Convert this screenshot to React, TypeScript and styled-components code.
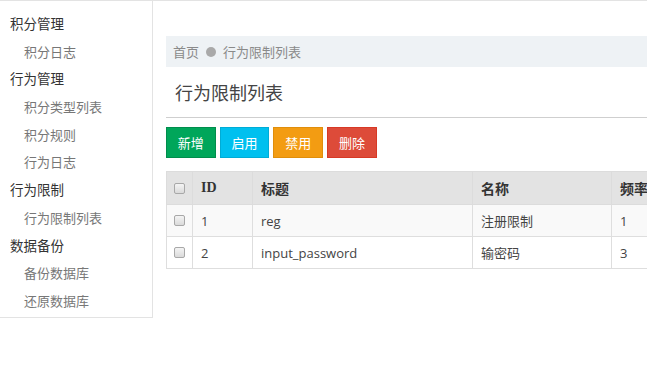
import styled, { createGlobalStyle } from "styled-components";

const GlobalStyle = createGlobalStyle`
  html, body {
    margin: 0;
    padding: 0;
    background: #fff;
    overflow: hidden;
  }
  body {
    font-family: "Open Sans", "Noto Sans CJK SC", sans-serif;
    font-size: 13px;
    color: #333;
  }
`;

type MenuItem = { label: string; sub?: boolean };

const menu: MenuItem[] = [
  { label: "积分管理" },
  { label: "积分日志", sub: true },
  { label: "行为管理" },
  { label: "积分类型列表", sub: true },
  { label: "积分规则", sub: true },
  { label: "行为日志", sub: true },
  { label: "行为限制" },
  { label: "行为限制列表", sub: true },
  { label: "数据备份" },
  { label: "备份数据库", sub: true },
  { label: "还原数据库", sub: true },
];

const rows = [
  { id: 1, title: "reg", name: "注册限制", rate: "1" },
  { id: 2, title: "input_password", name: "输密码", rate: "3" },
];

const buttons: { label: string; bg: string; border: string }[] = [
  { label: "新增", bg: "#00a65a", border: "#008d4c" },
  { label: "启用", bg: "#00c0ef", border: "#00acd6" },
  { label: "禁用", bg: "#f39c12", border: "#e08e0b" },
  { label: "删除", bg: "#dd4b39", border: "#d73925" },
];

const App = () => {
  return (
    <Root>
      <GlobalStyle />
      <Sidebar>
        {menu.map((m) => (
          <MenuRow key={m.label} sub={!!m.sub}>
            {m.label}
          </MenuRow>
        ))}
      </Sidebar>
      <Content>
        <Breadcrumb>
          <span>首页</span>
          <Dot />
          <span>行为限制列表</span>
        </Breadcrumb>
        <PageTitle>行为限制列表</PageTitle>
        <Toolbar>
          {buttons.map((b) => (
            <ActionBtn key={b.label} bg={b.bg} border={b.border}>
              {b.label}
            </ActionBtn>
          ))}
        </Toolbar>
        <Table>
          <colgroup>
            <col style={{ width: 26 }} />
            <col style={{ width: 60 }} />
            <col style={{ width: 220 }} />
            <col style={{ width: 139 }} />
            <col style={{ width: 120 }} />
          </colgroup>
          <thead>
            <tr>
              <Th>
                <Check />
              </Th>
              <Th>ID</Th>
              <Th>标题</Th>
              <Th>名称</Th>
              <Th>频率</Th>
            </tr>
          </thead>
          <tbody>
            {rows.map((r, i) => (
              <Tr key={r.id} striped={i % 2 === 0}>
                <Td>
                  <Check />
                </Td>
                <Td>{r.id}</Td>
                <Td>{r.title}</Td>
                <Td>{r.name}</Td>
                <Td>{r.rate}</Td>
              </Tr>
            ))}
          </tbody>
        </Table>
      </Content>
    </Root>
  );
};

export default App;

const Root = styled.div`
  display: flex;
  align-items: flex-start;
  width: 647px;
  height: 386px;
  overflow: hidden;
  border-top: 1px solid #e3e3e3;
  box-sizing: border-box;
`;

const Sidebar = styled.div`
  flex: 0 0 152px;
  padding: 9px 0 2px 0;
  border-right: 1px solid #e3e3e3;
  border-bottom: 1px solid #e3e3e3;
  font-family: "Noto Sans CJK SC", sans-serif;
`;

const MenuRow = styled.div<{ sub: boolean }>`
  height: 27.7px;
  line-height: 27.7px;
  padding-left: ${({ sub }) => (sub ? "24px" : "10px")};
  font-size: ${({ sub }) => (sub ? "13px" : "13.5px")};
  color: ${({ sub }) => (sub ? "#777" : "#333")};
  white-space: nowrap;
`;

const Content = styled.div`
  flex: 0 0 auto;
  width: 760px;
  margin-left: 13px;
  padding-top: 35px;
`;

const Breadcrumb = styled.div`
  display: flex;
  align-items: center;
  gap: 7px;
  height: 31px;
  padding-left: 7px;
  background: #eef2f5;
  color: #8a8a8a;
  font-family: "Noto Sans CJK SC", sans-serif;
  font-size: 13px;
`;

const Dot = styled.span`
  width: 10px;
  height: 10px;
  border-radius: 50%;
  background: #a9a9a9;
`;

const PageTitle = styled.div`
  height: 50px;
  line-height: 50px;
  padding-left: 9px;
  border-bottom: 1.5px solid #cfcfcf;
  font-family: "Noto Sans CJK SC", sans-serif;
  font-size: 18px;
  color: #444;
`;

const Toolbar = styled.div`
  display: flex;
  gap: 4px;
  margin-top: 9px;
`;

const ActionBtn = styled.div<{ bg: string; border: string }>`
  width: 47.7px;
  height: 29px;
  line-height: 29px;
  text-align: center;
  background: ${({ bg }) => bg};
  border: 1px solid ${({ border }) => border};
  color: #fff;
  font-family: "Noto Sans CJK SC", sans-serif;
  font-size: 13px;
`;

const Table = styled.table`
  margin-top: 13px;
  border-collapse: collapse;
  table-layout: fixed;
  width: 565px;
`;

const Th = styled.th`
  height: 32px;
  padding: 0 8px;
  text-align: left;
  background: #e3e3e3;
  border: 1px solid #dcdcdc;
  font-family: "Liberation Serif", "Noto Sans CJK SC", serif;
  font-size: 14px;
  font-weight: bold;
  color: #333;
  white-space: nowrap;
  &:first-child {
    padding: 0 0 0 7px;
  }
`;

const Tr = styled.tr<{ striped: boolean }>`
  background: ${({ striped }) => (striped ? "#f9f9f9" : "#fff")};
`;

const Td = styled.td`
  height: 31px;
  padding: 0 8px;
  border: 1px solid #dedede;
  font-size: 13px;
  color: #444;
  white-space: nowrap;
  &:first-child {
    padding: 0 0 0 7px;
  }
`;

const Check = styled.span`
  display: block;
  width: 9px;
  height: 9px;
  border: 1px solid #a8a8a8;
  border-radius: 2px;
  background: linear-gradient(#f4f4f4, #dadada);
`;
